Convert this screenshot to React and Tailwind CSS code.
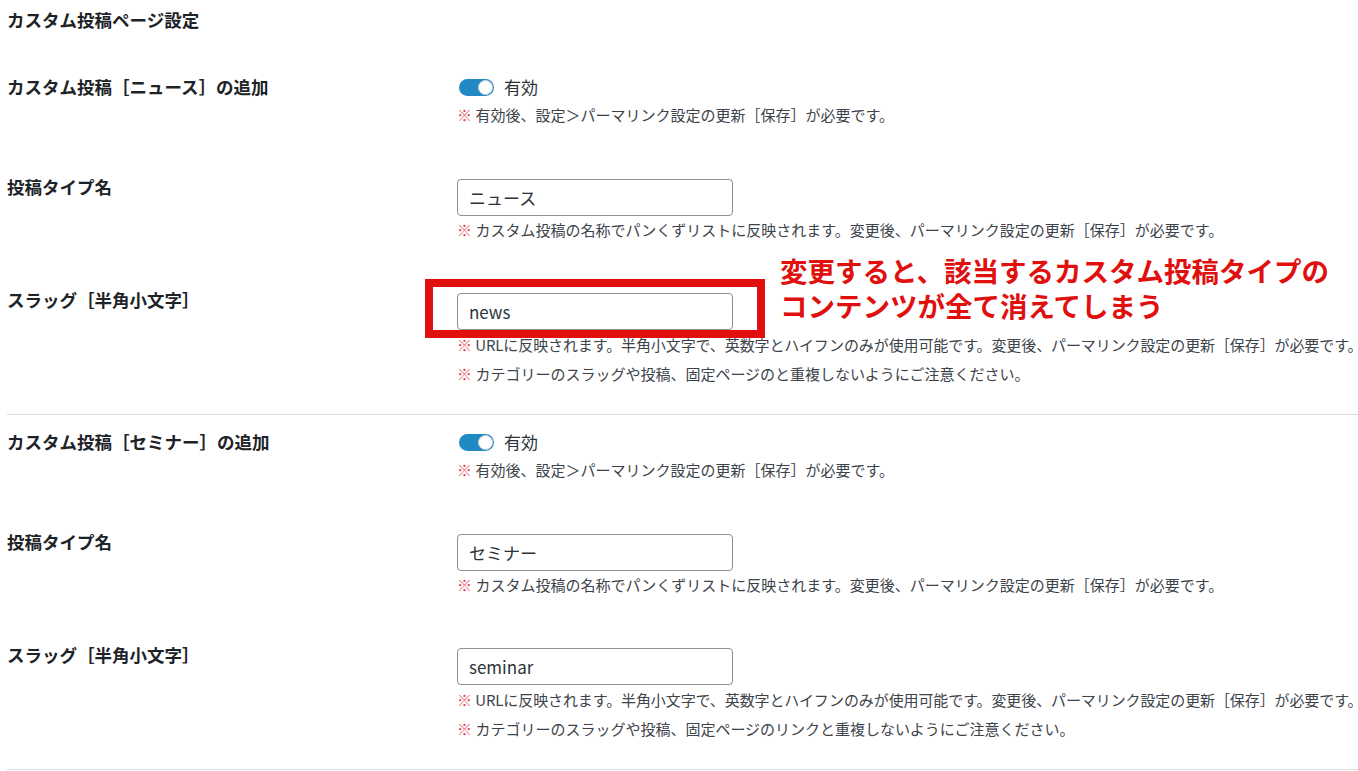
import React from "react";

const FONT = { fontFamily: '"Noto Sans CJK JP", "Noto Sans", sans-serif' };

function Help({ children, className = "" }) {
  return (
    <p className={"h-5 leading-5 text-[15px] text-[#3c434a] whitespace-nowrap " + className}>
      <span className="text-[#e8505b]">※</span> {children}
    </p>
  );
}

function Label({ children }) {
  return (
    <div className="w-[450px] shrink-0 h-6 leading-6 text-[17.5px] font-bold text-[#1d2327] whitespace-nowrap">
      {children}
    </div>
  );
}

function Toggle() {
  return (
    <div className="flex items-center h-6 gap-[10px]">
      <div className="relative w-[35px] h-[17px] rounded-full bg-[#2189c4] ml-[2px]">
        <div className="absolute right-[1px] top-[1px] w-[15px] h-[15px] rounded-full bg-white border border-[#d0d4d8]" />
      </div>
      <span className="text-[17px] text-[#2c3338]">有効</span>
    </div>
  );
}

function Input({ value }) {
  return (
    <div className="w-[276px] h-[37px] border border-[#8c8f94] rounded-[4px] bg-white flex items-center px-[11px] text-[17px] text-[#2c3338]">
      {value}
    </div>
  );
}

function PostTypeGroup({ name, slug, slugHelp2 }) {
  return (
    <>
      <div className="flex">
        <Label>カスタム投稿［{name}］の追加</Label>
        <div className="flex flex-col">
          <Toggle />
          <Help className="mt-[6px]">有効後、設定＞パーマリンク設定の更新［保存］が必要です。</Help>
        </div>
      </div>
      <div className="flex mt-[50px]">
        <Label>投稿タイプ名</Label>
        <div className="flex flex-col pt-[4px]">
          <Input value={name} />
          <Help className="mt-[4px]">カスタム投稿の名称でパンくずリストに反映されます。変更後、パーマリンク設定の更新［保存］が必要です。</Help>
        </div>
      </div>
      <div className="flex mt-[48px]">
        <Label>スラッグ［半角小文字］</Label>
        <div className="flex flex-col pt-[5px]">
          <Input value={slug} />
          <Help className="mt-[5px] tracking-[-0.1px]">URLに反映されます。半角小文字で、英数字とハイフンのみが使用可能です。変更後、パーマリンク設定の更新［保存］が必要です。</Help>
          <Help className="mt-[9px]">{slugHelp2}</Help>
        </div>
      </div>
    </>
  );
}

export default function App() {
  return (
    <div className="relative w-[1358px] h-[771px] overflow-hidden bg-white pl-[7px]" style={FONT}>
      <h1 className="mt-[8px] h-6 leading-6 text-[17.5px] font-bold text-[#1d2327]">カスタム投稿ページ設定</h1>

      <div className="mt-[43px]">
        <PostTypeGroup
          name="ニュース"
          slug="news"
          slugHelp2="カテゴリーのスラッグや投稿、固定ページのと重複しないようにご注意ください。"
        />
      </div>

      <div className="mt-[30px] h-px bg-[#dcdcde]" />

      <div className="mt-[15px]">
        <PostTypeGroup
          name="セミナー"
          slug="seminar"
          slugHelp2="カテゴリーのスラッグや投稿、固定ページのリンクと重複しないようにご注意ください。"
        />
      </div>

      <div className="mt-[30px] h-px bg-[#dcdcde]" />

      {/* annotation overlay */}
      <div className="absolute left-[425px] top-[279px] w-[340px] h-[59px] border-[8px] border-[#e0100f]" />
      <div className="absolute left-[780px] top-[253px] text-[27.5px] leading-[35px] font-bold text-[#e0100f] whitespace-nowrap">
        <p>変更すると、該当するカスタム投稿タイプの</p>
        <p>コンテンツが全て消えてしまう</p>
      </div>
    </div>
  );
}
